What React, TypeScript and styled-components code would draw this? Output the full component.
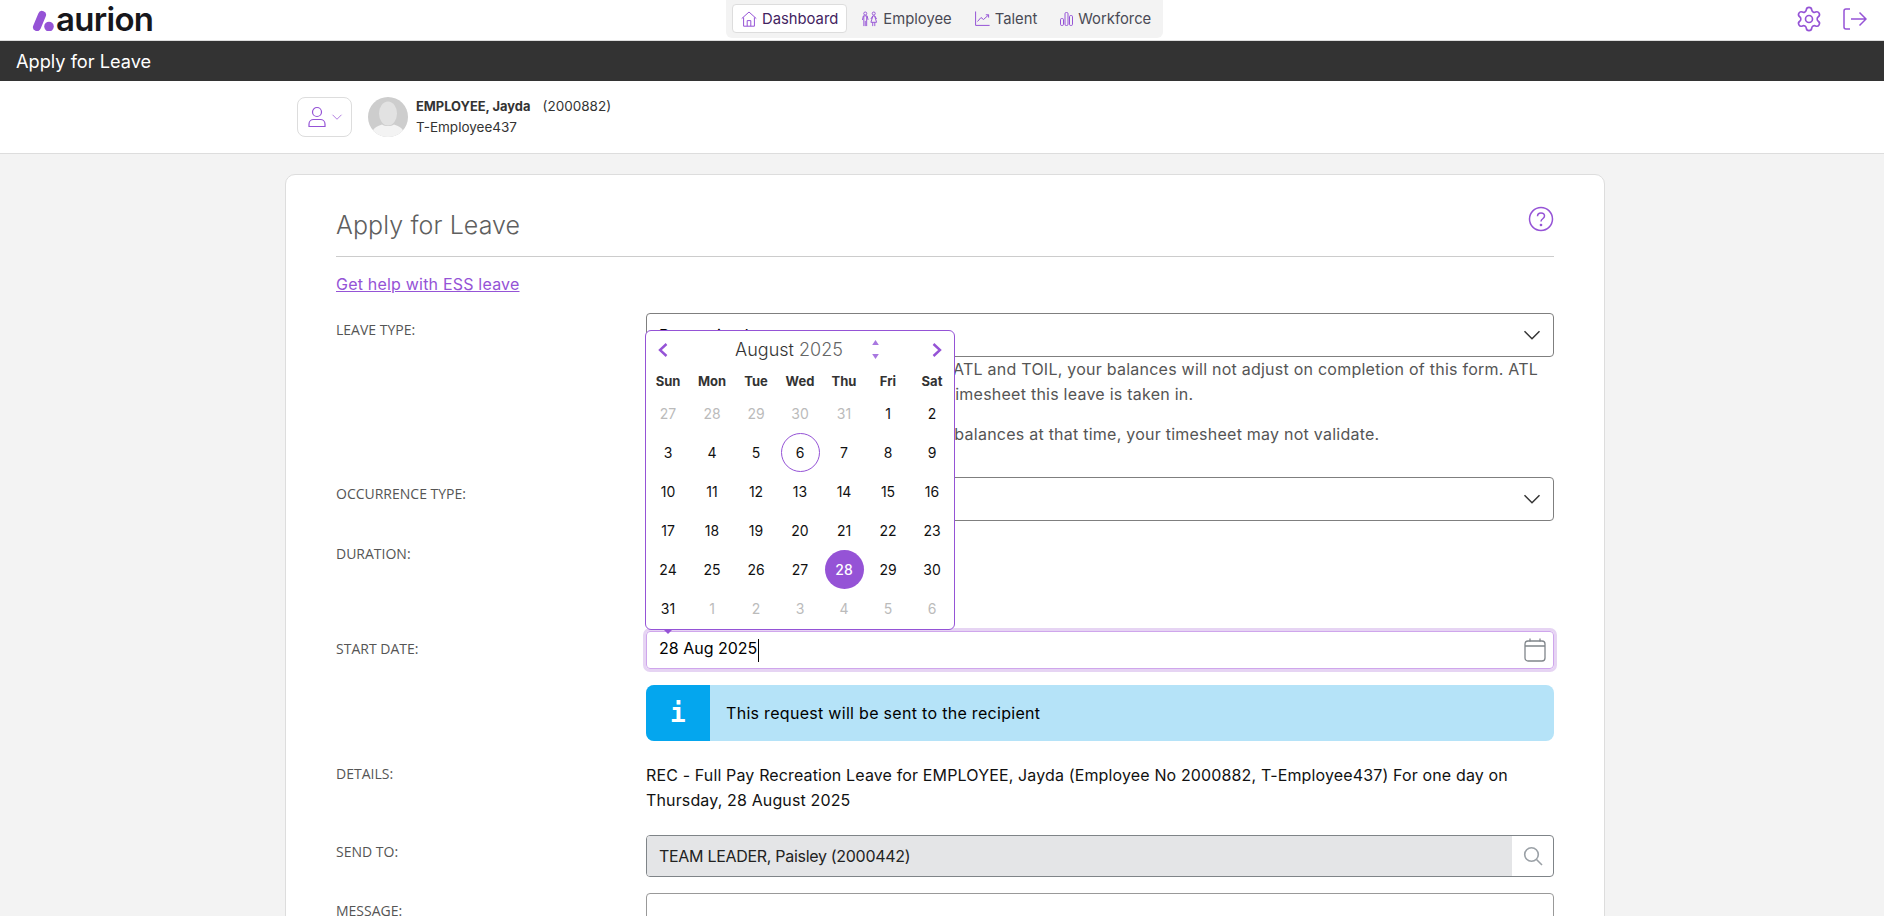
import styled, { createGlobalStyle } from "styled-components"
import { Settings } from "lucide-react"

const purple = "#9553d6"

const GlobalStyle = createGlobalStyle`
    html, body {
        margin: 0;
        height: 916px;
        overflow: hidden;
        background: #f3f3f3;
        font-family: Inter, "Noto Sans", "Liberation Sans", sans-serif;
        color: #000;
    }
    * { box-sizing: border-box; }
`

const TopBar = styled.header`
    display: grid;
    grid-template-columns: 726px 437px 1fr;
    height: 41px;
    background: #fff;
    border-bottom: 1px solid #ddd;
`

const Logo = styled.div`
    display: flex;
    align-items: center;
    gap: 2px;
    padding-left: 32px;
    height: 38px;
`

const LogoWord = styled.span`
    font-size: 33px;
    font-weight: 600;
    letter-spacing: -0.7px;
    line-height: 38px;
    color: #17171c;
`

const Nav = styled.nav`
    display: flex;
    align-items: flex-start;
    height: 38px;
    padding: 4px 6px;
    gap: 5px;
    background: #f3f3f3;
    border-radius: 0 0 6px 6px;
`

const NavItem = styled.a<{ $active?: boolean }>`
    display: flex;
    align-items: center;
    gap: 5px;
    height: 29px;
    padding: 0 8px;
    font-size: 14.8px;
    color: ${p => (p.$active ? "#43235f" : "#4a4a55")};
    background: ${p => (p.$active ? "#fff" : "transparent")};
    border: 1px solid ${p => (p.$active ? "#ddd" : "transparent")};
    border-radius: 4px;
`

const TopActions = styled.div`
    display: flex;
    justify-content: flex-end;
    align-items: center;
    gap: 20px;
    padding-right: 17px;
    height: 38px;
    color: ${purple};
`

const TitleBar = styled.div`
    height: 40px;
    display: flex;
    align-items: center;
    padding-left: 16px;
    background: #333;
    color: #fff;
    font-size: 18.2px;
`

const UserBar = styled.div`
    display: flex;
    align-items: center;
    height: 73px;
    padding: 0 0 0 297px;
    background: #fff;
    border-bottom: 1px solid #ddd;
`

const UserButton = styled.button`
    display: flex;
    align-items: center;
    justify-content: center;
    gap: 4px;
    width: 55px;
    height: 40px;
    padding: 0;
    margin-right: 16px;
    background: #fff;
    color: ${purple};
    border: 1px solid #ddd;
    border-radius: 8px;
`

const UserText = styled.div`
    margin-left: 8px;
    font-size: 13.5px;
    line-height: 21px;
    color: #333;
`

const UserName = styled.strong`
    font-weight: 700;
    font-size: 12.9px;
    margin-right: 12px;
`

const Card = styled.main`
    width: 1320px;
    margin: 20px 0 0 285px;
    padding: 30px 50px 0;
    background: #fff;
    border: 1px solid #ddd;
    border-radius: 10px;
    height: 900px;
`

const CardHead = styled.div`
    display: flex;
    justify-content: space-between;
    align-items: flex-start;
    height: 52px;
    border-bottom: 1px solid #ccc;
    color: ${purple};
    padding-top: 1px;
`

const CardTitle = styled.h1`
    margin: 1px 0 0;
    font-size: 25px;
    font-weight: 300;
    line-height: 36px;
    letter-spacing: 0.1px;
    color: #5f5f5f;
`

const HelpLink = styled.a`
    display: block;
    margin: 15px 0 17px;
    font-size: 16px;
    line-height: 24px;
    letter-spacing: 0.2px;
    color: ${purple};
    text-decoration: underline;
`

const Row = styled.div<{ $gap?: number }>`
    display: grid;
    grid-template-columns: 310px 908px;
    margin-bottom: ${p => p.$gap ?? 16}px;
`

const Label = styled.label<{ $top?: number }>`
    padding-top: ${p => p.$top ?? 8}px;
    font-family: "Open Sans", sans-serif;
    font-size: 14px;
    line-height: 18px;
    color: #555;
`

const SelectBox = styled.div`
    position: relative;
    display: flex;
    align-items: center;
    justify-content: space-between;
    height: 44px;
    padding: 0 11px 0 12px;
    font-size: 16px;
    border: 1px solid #7f7f7f;
    border-radius: 4px;
`

const Note = styled.p`
    margin: 0 0 15px;
    font-size: 16px;
    line-height: 25px;
    letter-spacing: 0.24px;
    color: #555;
    white-space: nowrap;
`

const DurationOptions = styled.div`
    height: 79px;
`

const DateField = styled.div`
    position: relative;
    display: flex;
    align-items: center;
    justify-content: space-between;
    height: 38px;
    padding: 0 7px 0 12px;
    color: #000;
    font-size: 16px;
    border: 1px solid #cfa6ec;
    border-radius: 4px;
    box-shadow: 0 0 0 3px #e6d4f3;
`

const Caret = styled.span`
    display: inline-block;
    width: 1px;
    height: 23px;
    margin-left: 1px;
    background: #000;
    vertical-align: middle;
`

const Popup = styled.div`
    position: absolute;
    left: -2px;
    bottom: 38px;
    width: 310px;
    height: 300px;
    background: #fff;
    border: 1px solid ${purple};
    border-radius: 6px;
    color: #000;
    z-index: 5;

    &::after {
        content: "";
        position: absolute;
        left: 18px;
        bottom: -5px;
        border-left: 4px solid transparent;
        border-right: 4px solid transparent;
        border-top: 4px solid ${purple};
    }
`

const PopupHead = styled.div`
    display: flex;
    align-items: center;
    height: 37px;
    color: ${purple};
`

const ArrowButton = styled.span<{ $side: "left" | "right" }>`
    display: flex;
    justify-content: center;
    width: 34px;
    margin-left: ${p => (p.$side === "left" ? "0" : "auto")};
`

const MonthLabel = styled.div`
    margin-left: 54px;
    width: 110px;
    text-align: center;
    font-size: 18px;
    font-weight: 300;
    color: #333;
`

const YearLabel = styled.span`
    color: #666;
`

const Spinner = styled.div`
    display: flex;
    flex-direction: column;
    gap: 9px;
    margin-left: 27px;
    color: #a877e0;
`

const CalendarGrid = styled.div`
    display: grid;
    grid-template-columns: repeat(7, 44px);
    grid-auto-rows: 39px;
`

const WeekRow = styled.div`
    display: grid;
    grid-template-columns: repeat(7, 44px);
    height: 26px;
`

const WeekDay = styled.div`
    display: flex;
    align-items: center;
    justify-content: center;
    font-size: 13px;
    font-weight: 700;
    color: #333;
`

const Day = styled.div<{ $muted?: boolean; $today?: boolean; $selected?: boolean }>`
    display: flex;
    align-items: center;
    justify-content: center;
    justify-self: center;
    width: 39px;
    height: 39px;
    font-size: 14px;
    border-radius: 50%;
    color: ${p => (p.$selected ? "#fff" : p.$muted ? "#bbb" : "#111")};
    background: ${p => (p.$selected ? purple : "transparent")};
    font-weight: ${p => (p.$selected ? 500 : 400)};
    border: ${p => (p.$today ? `1px solid ${purple}` : "none")};
`

const Alert = styled.div`
    display: flex;
    align-items: center;
    height: 56px;
    background: #b5e3f8;
    border-radius: 8px;
    overflow: hidden;
    font-size: 16px;
    letter-spacing: 0.3px;
`

const AlertIcon = styled.div`
    display: flex;
    align-items: center;
    justify-content: center;
    width: 64px;
    height: 100%;
    margin-right: 16px;
    background: #04a6ee;
    color: #fff;
    font-family: "DejaVu Sans Mono", monospace;
    font-size: 26px;
    font-weight: 700;
`

const Details = styled.div`
    padding-top: 6px;
    font-size: 16px;
    line-height: 25px;
    letter-spacing: 0.14px;
    color: #111;
    white-space: pre-line;
`

const SearchBox = styled.div`
    display: flex;
    height: 42px;
    border: 1px solid #7f8488;
    border-radius: 4px;
    overflow: hidden;
`

const SearchValue = styled.div`
    flex: 1;
    display: flex;
    align-items: center;
    padding-left: 12px;
    background: #e4e5e7;
    font-size: 16px;
    letter-spacing: -0.3px;
    color: #222;
`

const SearchButton = styled.div`
    display: flex;
    align-items: center;
    justify-content: center;
    width: 41px;
    color: #9aa0a6;
`

const MessageBox = styled.div`
    height: 80px;
    border: 1px solid #999;
    border-radius: 4px;
`

const previousDays = [27, 28, 29, 30, 31]
const monthDays = Array.from({ length: 31 }, (_, i) => i + 1)
const nextDays = [1, 2, 3, 4, 5, 6]

function Chevron({ size = 20, color = "currentColor", width = 1.2 }: { size?: number; color?: string; width?: number }) {
    return (
        <svg width={size} height={size} viewBox="0 0 16 16" fill="none" stroke={color} strokeWidth={width}>
            <path d="M2 5l6 6 6-6" />
        </svg>
    )
}

function HomeIcon() {
    return (
        <svg width="16" height="16" viewBox="0 0 16 16" fill="none" stroke={purple} strokeWidth="1">
            <path d="M.7 7.6L8 1l7.3 6.6M2.6 6.4v8.800h10.800V6.400M6.200 15.200V9.600h3.600v5.600" />
        </svg>
    )
}

function PeopleIcon() {
    return (
        <svg width="17" height="16" viewBox="0 0 18 16" fill="none" stroke={purple} strokeWidth="1">
            <circle cx="4.500" cy="2.200" r="1.600" />
            <path d="M1.500 9l1-4.300h4L7.500 9M3 5v10.500M6 5v10.500M4.500 10v5.500" />
            <circle cx="13.500" cy="2.200" r="1.600" />
            <path d="M10.500 8l2-3.300h2l2 3.300M12.500 5L10.500 11.500h6L14.500 5M12.400 11.500v4M14.600 11.500v4" />
        </svg>
    )
}

function ChartIcon() {
    return (
        <svg width="15" height="15" viewBox="0 0 15 15" fill="none" stroke={purple} strokeWidth="1">
            <path d="M.6.5v13.900h14M2.500 10.500l3.500-4 2.500 2L13.500 4M10.800 3.800h2.800v2.800" />
        </svg>
    )
}

function BarsIcon() {
    return (
        <svg width="13" height="14" viewBox="0 0 13 14" fill="none" stroke={purple} strokeWidth="1">
            <rect x=".5" y="6.500" width="3" height="7" rx="1.200" />
            <rect x="5" y=".5" width="3" height="13" rx="1.200" />
            <rect x="9.500" y="3.500" width="3" height="10" rx="1.200" />
        </svg>
    )
}

function LogoutIcon() {
    return (
        <svg width="24" height="24" viewBox="0 0 24 24" fill="none" stroke={purple} strokeWidth="1.500">
            <path d="M7 2H3a2 2 0 0 0-2 2v16a2 2 0 0 0 2 2h4M8 12h15M16.500 5.500L23 12l-6.500 6.500" />
        </svg>
    )
}

function Avatar() {
    return (
        <svg width="40" height="40" viewBox="0 0 40 40">
            <defs>
                <clipPath id="avatar-clip">
                    <circle cx="20" cy="20" r="20" />
                </clipPath>
            </defs>
            <g clipPath="url(#avatar-clip)">
                <rect width="40" height="40" fill="#cdcdcd" />
                <ellipse cx="20" cy="16.500" rx="9" ry="12" fill="#e2e2e2" />
                <path d="M3 40c0-8 6-11 11-12.500 3 2 9 2 12 0C31 29 37 32 37 40z" fill="#f3f3f3" />
            </g>
        </svg>
    )
}

export default function App() {
    return (
        <>
            <GlobalStyle />
            <TopBar>
                <Logo>
                    <svg width="22" height="24" viewBox="0 0 22 24">
                        <path d="M5 20L10 8" stroke={purple} strokeWidth="8" strokeLinecap="round" />
                        <circle cx="17" cy="19.500" r="4.800" fill={purple} />
                    </svg>
                    <LogoWord>aurion</LogoWord>
                </Logo>
                <Nav>
                    <NavItem $active>
                        <HomeIcon />
                        Dashboard
                    </NavItem>
                    <NavItem>
                        <PeopleIcon />
                        Employee
                    </NavItem>
                    <NavItem>
                        <ChartIcon />
                        Talent
                    </NavItem>
                    <NavItem>
                        <BarsIcon />
                        Workforce
                    </NavItem>
                </Nav>
                <TopActions>
                    <Settings size={28} strokeWidth={1.400} color={purple} />
                    <LogoutIcon />
                </TopActions>
            </TopBar>
            <TitleBar>Apply for Leave</TitleBar>
            <UserBar>
                <UserButton>
                    <svg width="20" height="22" viewBox="0 0 20 22" fill="none" stroke={purple} strokeWidth="1.200">
                        <circle cx="10" cy="6" r="4.500" />
                        <path d="M2 20.500v-2.500c0-3 2.500-4.500 4.500-4.500h7c2 0 4.500 1.500 4.500 4.500v2.500z" />
                    </svg>
                    <Chevron size={12} width={1} />
                </UserButton>
                <Avatar />
                <UserText>
                    <div>
                        <UserName>EMPLOYEE, Jayda</UserName>(2000882)
                    </div>
                    <div>T-Employee437</div>
                </UserText>
            </UserBar>
            <Card>
                <CardHead>
                    <CardTitle>Apply for Leave</CardTitle>
                    <svg width="26" height="26" viewBox="0 0 26 26" fill="none" stroke={purple} strokeWidth="1.500">
                        <circle cx="13" cy="13" r="11.500" />
                        <path d="M9.500 10.300c0-2 1.600-3.300 3.500-3.300s3.500 1.300 3.500 3.100c0 2.700-3.500 2.600-3.500 5.400" />
                        <circle cx="13" cy="19" r=".6" fill={purple} />
                    </svg>
                </CardHead>
                <HelpLink>Get help with ESS leave</HelpLink>
                <Row $gap={15}>
                    <Label>LEAVE TYPE:</Label>
                    <div>
                        <SelectBox>
                            Recreation Leave
                            <Chevron color="#333" />
                        </SelectBox>
                        <Note>Please note that for leave type such as ATL and TOIL, your balances will not adjust on completion of this form. ATL<br />and TOIL will adjust on approval of the timesheet this leave is taken in.</Note>
                        <Note>If you do not have sufficient leave hour balances at that time, your timesheet may not validate.</Note>
                    </div>
                </Row>
                <Row $gap={15}>
                    <Label>OCCURRENCE TYPE:</Label>
                    <SelectBox>
                        <span />
                        <Chevron color="#333" />
                    </SelectBox>
                </Row>
                <Row>
                    <Label $top={9}>DURATION:</Label>
                    <DurationOptions />
                </Row>
                <Row>
                    <Label $top={9}>START DATE:</Label>
                    <DateField>
                        <span>28 Aug 2025<Caret /></span>
                        <svg width="22" height="24" viewBox="0 0 22 24" fill="none" stroke="#80868b" strokeWidth="1.300">
                            <rect x="1" y="3" width="20" height="20" rx="3" />
                            <path d="M1 8h20M6 .500v3M16 .500v3" />
                        </svg>
                        <Popup>
                            <PopupHead>
                                <ArrowButton $side="left">
                                    <svg width="12" height="16" viewBox="0 0 12 16" fill="none" stroke={purple} strokeWidth="2.400">
                                        <path d="M9.500 2L3 8l6.500 6" />
                                    </svg>
                                </ArrowButton>
                                <MonthLabel>August <YearLabel>2025</YearLabel></MonthLabel>
                                <Spinner>
                                    <svg width="9" height="5" viewBox="0 0 10 6" fill="currentColor"><path d="M5 0l4 6H1z" /></svg>
                                    <svg width="9" height="5" viewBox="0 0 10 6" fill="currentColor"><path d="M5 6L1 0h8z" /></svg>
                                </Spinner>
                                <ArrowButton $side="right">
                                    <svg width="12" height="16" viewBox="0 0 12 16" fill="none" stroke={purple} strokeWidth="2.400">
                                        <path d="M2.500 2L9 8l-6.500 6" />
                                    </svg>
                                </ArrowButton>
                            </PopupHead>
                            <WeekRow>
                                {["Sun", "Mon", "Tue", "Wed", "Thu", "Fri", "Sat"].map(d => (
                                    <WeekDay key={d}>{d}</WeekDay>
                                ))}
                            </WeekRow>
                            <CalendarGrid>
                                {previousDays.map(d => <Day key={`p${d}`} $muted>{d}</Day>)}
                                {monthDays.map(d => (
                                    <Day key={d} $today={d === 6} $selected={d === 28}>{d}</Day>
                                ))}
                                {nextDays.map(d => <Day key={`n${d}`} $muted>{d}</Day>)}
                            </CalendarGrid>
                        </Popup>
                    </DateField>
                </Row>
                <Row>
                    <div />
                    <Alert>
                        <AlertIcon>i</AlertIcon>
                        This request will be sent to the recipient
                    </Alert>
                </Row>
                <Row $gap={22}>
                    <Label>DETAILS:</Label>
                    <Details>{"REC - Full Pay Recreation Leave for EMPLOYEE, Jayda (Employee No 2000882, T-Employee437) For one day on\nThursday, 28 August 2025"}</Details>
                </Row>
                <Row>
                    <Label>SEND TO:</Label>
                    <SearchBox>
                        <SearchValue>TEAM LEADER, Paisley (2000442)</SearchValue>
                        <SearchButton>
                            <svg width="20" height="20" viewBox="0 0 20 20" fill="none" stroke="currentColor" strokeWidth="1.600">
                                <circle cx="8.500" cy="8.500" r="6.800" />
                                <path d="M13.500 13.500L19 19" />
                            </svg>
                        </SearchButton>
                    </SearchBox>
                </Row>
                <Row>
                    <Label $top={9}>MESSAGE:</Label>
                    <MessageBox />
                </Row>
            </Card>
        </>
    )
}
